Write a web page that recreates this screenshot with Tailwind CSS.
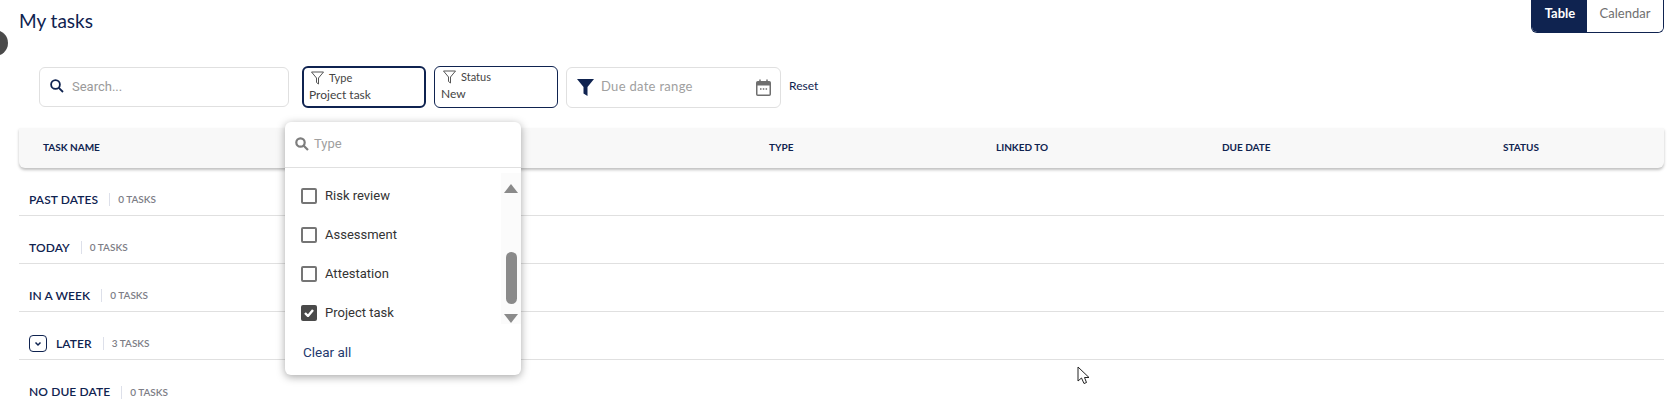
<!DOCTYPE html>
<html lang="en">
<head>
    <meta charset="UTF-8">
    <title>My tasks</title>
    <script src="https://cdn.jsdelivr.net/npm/@tailwindcss/browser@4"></script>
</head>
<body class="bg-white overflow-hidden font-['Lato',sans-serif] text-[#0f2350]">
<div class="relative w-[1677px] h-[407px] overflow-hidden">
    <!-- Sidebar toggle peeking in -->
    <div class="absolute left-[-18px] top-[30px] w-[26px] h-[26px] rounded-full bg-[#4a4a4a]"></div>

    <!-- Header -->
    <div class="flex justify-between pl-[19px] pr-[13px] h-[66px]">
        <h1 class="text-[19px] leading-6 mt-[9px]">My tasks</h1>
        <div class="flex h-[33px] rounded-b-md border border-t-0 border-[#0f2350] overflow-hidden text-[13px]">
            <div class="w-[55px] bg-[#0f2350] text-white font-bold flex items-center justify-center pb-[5px] pl-[1px]">Table</div>
            <div class="w-[76px] bg-white text-[#6f6f6f] flex items-center justify-center pb-[5px]">Calendar</div>
        </div>
    </div>

    <!-- Filters -->
    <div class="flex items-center pl-[39px] h-[42px] text-[13px]">
        <div class="w-[250px] h-[40px] rounded-md border border-[#e0e0e0] flex items-center pl-[10px] gap-[8px] font-['Roboto',sans-serif] text-[#9a9a9a]">
            <svg class="mt-[-3px]" width="14" height="14" viewBox="0 0 14 14" fill="none" stroke="#0f2350" stroke-width="1.8"><circle cx="5.5" cy="5.5" r="4.4"/><path d="M8.8 8.8L13 13"/></svg>
            <span>Search...</span>
        </div>
        <div class="ml-[13px] w-[124px] h-[42px] rounded-md border-2 border-[#0f2350] pl-[5px] pt-[2px]">
            <div class="flex items-center gap-[5px] pl-[2px] text-[11px] leading-[16px] text-[#444]">
                <svg width="13" height="14" viewBox="0 0 13 14" fill="none" stroke="#555" stroke-width="1"><path d="M0.5 1h12L7.5 7v6l-2-1.5V7z"/></svg>
                <span>Type</span>
            </div>
            <div class="text-[12px] leading-[18px] text-[#444]">Project task</div>
        </div>
        <div class="ml-[8px] w-[124px] h-[42px] rounded-md border border-[#0f2350] pl-[6px] pt-[2px]">
            <div class="flex items-center gap-[5px] pl-[2px] text-[11px] leading-[16px] text-[#444]">
                <svg width="13" height="14" viewBox="0 0 13 14" fill="none" stroke="#555" stroke-width="1"><path d="M0.5 1h12L7.5 7v6l-2-1.5V7z"/></svg>
                <span>Status</span>
            </div>
            <div class="text-[12px] leading-[18px] text-[#444]">New</div>
        </div>
        <div class="ml-[8px] w-[215px] h-[41px] rounded-md border border-[#e0e0e0] flex items-center pl-[10px] pr-[9px]">
            <svg width="17" height="18" viewBox="0 0 17 18" fill="#0f2350"><path d="M0 1h17L10.5 9v9l-4-2.5V9z"/></svg>
            <span class="ml-[7px] text-[#a0a0a0] tracking-[0.3px] flex-1">Due date range</span>
            <svg width="15" height="17" viewBox="0 0 15 17"><rect x="0.75" y="2.75" width="13.5" height="13.5" rx="1" fill="none" stroke="#6e6e6e" stroke-width="1.5"/><rect x="1" y="3" width="13" height="3.5" fill="#6e6e6e"/><path d="M4 0.5v3M11 0.5v3" stroke="#6e6e6e" stroke-width="1.5"/><path d="M4 10h1.5M6.8 10h1.5M9.6 10h1.5" stroke="#6e6e6e" stroke-width="1.5"/></svg>
        </div>
        <a class="ml-[8px] text-[12px] pb-[2px]">Reset</a>
    </div>

    <!-- Table header -->
    <div class="ml-[19px] mr-[13px] mt-[20px] h-[40px] bg-[#f8f8f8] rounded-b-md shadow-[0_2px_3px_rgba(0,0,0,0.25)] grid grid-cols-[726px_227px_226px_281px_1fr] items-center pl-[24px] pb-[1px] text-[10px] font-bold text-[#0f2350]">
        <div>TASK NAME</div>
        <div>TYPE</div>
        <div>LINKED TO</div>
        <div>DUE DATE</div>
        <div>STATUS</div>
    </div>

    <!-- Groups -->
    <div class="ml-[19px] mr-[13px]">
        <div class="h-[48px] pt-[16px] border-b border-[#e0e0e0] flex items-center pl-[10px]">
            <span class="text-[12px] font-semibold tracking-[0.1px]">PAST DATES</span>
            <span class="ml-[11px] h-[13px] border-l border-[#dde0ea]"></span>
            <span class="ml-[8px] text-[10px] font-semibold text-[#7d7d86]">0 TASKS</span>
        </div>
        <div class="h-[48px] pt-[16px] border-b border-[#e0e0e0] flex items-center pl-[10px]">
            <span class="text-[12px] font-semibold tracking-[0.1px]">TODAY</span>
            <span class="ml-[11px] h-[13px] border-l border-[#dde0ea]"></span>
            <span class="ml-[8px] text-[10px] font-semibold text-[#7d7d86]">0 TASKS</span>
        </div>
        <div class="h-[48px] pt-[16px] border-b border-[#e0e0e0] flex items-center pl-[10px]">
            <span class="text-[12px] font-semibold tracking-[0.1px]">IN A WEEK</span>
            <span class="ml-[11px] h-[13px] border-l border-[#dde0ea]"></span>
            <span class="ml-[8px] text-[10px] font-semibold text-[#7d7d86]">0 TASKS</span>
        </div>
        <div class="h-[48px] pt-[16px] border-b border-[#e0e0e0] flex items-center pl-[10px]">
            <span class="w-[18px] h-[17px] rounded-[4px] border border-[#0f2350] flex items-center justify-center">
                <svg width="8" height="6" viewBox="0 0 8 6" fill="none" stroke="#0f2350" stroke-width="1.5"><path d="M1.5 1.5L4 4l2.5-2.5"/></svg>
            </span>
            <span class="ml-[9px] text-[12px] font-semibold tracking-[0.1px]">LATER</span>
            <span class="ml-[11px] h-[13px] border-l border-[#dde0ea]"></span>
            <span class="ml-[8px] text-[10px] font-semibold text-[#7d7d86]">3 TASKS</span>
        </div>
        <div class="h-[48px] pt-[16px] flex items-center pl-[10px]">
            <span class="text-[12px] font-semibold tracking-[0.1px]">NO DUE DATE</span>
            <span class="ml-[11px] h-[13px] border-l border-[#dde0ea]"></span>
            <span class="ml-[8px] text-[10px] font-semibold text-[#7d7d86]">0 TASKS</span>
        </div>
    </div>

    <!-- Type dropdown -->
    <div class="absolute left-[285px] top-[122px] w-[236px] h-[253px] bg-white rounded-md shadow-[0_2px_8px_rgba(0,0,0,0.35)] font-['Roboto',sans-serif]">
        <div class="h-[46px] border-b border-[#e0e0e0] flex items-center pl-[10px] pb-[1px] gap-[5px] text-[13px] text-[#a0a0a0]">
            <svg width="14" height="14" viewBox="0 0 14 14" fill="none" stroke="#7d7d7d" stroke-width="2.2"><circle cx="5.5" cy="5.5" r="4.2"/><path d="M8.5 8.5L13 13"/></svg>
            <span>Type</span>
        </div>
        <div class="relative pt-[8px] pl-[16px] text-[13px] text-[#333]">
            <div class="h-[39px] flex items-center gap-[8px]"><span class="w-[16px] h-[16px] rounded-[2px] border-2 border-[#757575]"></span>Risk review</div>
            <div class="h-[39px] flex items-center gap-[8px]"><span class="w-[16px] h-[16px] rounded-[2px] border-2 border-[#757575]"></span>Assessment</div>
            <div class="h-[39px] flex items-center gap-[8px]"><span class="w-[16px] h-[16px] rounded-[2px] border-2 border-[#757575]"></span>Attestation</div>
            <div class="h-[39px] flex items-center gap-[8px]">
                <span class="w-[16px] h-[16px] rounded-[2px] bg-[#4a4a4a] flex items-center justify-center">
                    <svg width="10" height="8" viewBox="0 0 10 8" fill="none" stroke="#fff" stroke-width="2.4"><path d="M1 4l3 3 5-6"/></svg>
                </span>Project task
            </div>
            <!-- scrollbar -->
            <div class="absolute right-0 top-[5px] w-[20px] h-[151px] bg-[#fbfbfb] flex flex-col items-center">
                <svg class="mt-[11px]" width="14" height="9" viewBox="0 0 14 9" fill="#8a8a8a"><path d="M7 0l7 9H0z"/></svg>
                <div class="mt-[59px] w-[11px] h-[52px] rounded-md bg-[#8a8a8a]"></div>
                <svg class="mt-[10px]" width="14" height="9" viewBox="0 0 14 9" fill="#8a8a8a"><path d="M0 0h14L7 9z"/></svg>
            </div>
        </div>
        <div class="pl-[18px] mt-[10px] text-[13.5px] text-[#1f3a6e]">Clear all</div>
    </div>

    <!-- Mouse pointer -->
    <svg class="absolute left-[1077px] top-[366px]" width="14" height="20" viewBox="0 0 14 20" fill="#fff" stroke="#222" stroke-width="1"><path d="M1 1v14l3.5-3 2.5 5.5 2.5-1L7.5 11.5H12z"/></svg>
</div>
</body>
</html>
